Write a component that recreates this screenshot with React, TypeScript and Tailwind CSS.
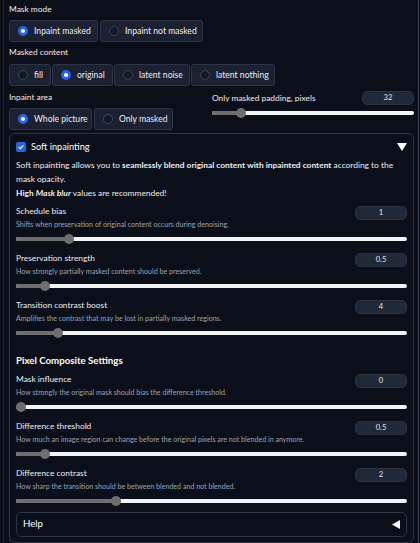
import React from "react";

function Radio({ label, checked, w }: { label: string; checked?: boolean; w: string }) {
  return (
    <div
      className={`flex h-[22px] shrink-0 items-center gap-[6px] whitespace-nowrap rounded-[3px] border border-[#2e3645] bg-[#1b2130] pl-[8px] text-[8.6px] text-[#eceef2] ${w}`}
    >
      {checked ? (
        <span className="flex h-[10px] w-[10px] items-center justify-center rounded-full bg-[#2563eb]">
          <span className="h-[4px] w-[4px] rounded-full bg-white" />
        </span>
      ) : (
        <span className="h-[10px] w-[10px] rounded-full border border-[#3f4856] bg-[#111827]" />
      )}
      <span>{label}</span>
    </div>
  );
}

// pct = where the thumb centre sits along the track
function Slider({ pct }: { pct: number }) {
  return (
    <div className="relative h-[10px]">
      <div className="absolute left-0 right-0 top-[3px] h-[4px] rounded-full bg-[#f3f4f6]" />
      <div
        className="absolute left-0 top-[3px] h-[4px] rounded-full bg-[#6e6e6e]"
        style={{ width: `${pct}%` }}
      />
      <div
        className="absolute top-0 h-[10px] w-[10px] rounded-full bg-[#6e6e6e]"
        style={{ left: `calc(${pct}% - 5px)` }}
      />
    </div>
  );
}

function NumBox({ value }: { value: string }) {
  return (
    <div className="flex h-[14px] w-[52px] items-center justify-center rounded-[5px] border border-[#2a3240] bg-[#1f2937] text-[7.6px] text-[#e5e7eb]">
      {value}
    </div>
  );
}

function Setting({
  title,
  info,
  value,
  pct,
}: {
  title: string;
  info: string;
  value: string;
  pct: number;
}) {
  return (
    <div className="flex h-[40px] flex-col">
      <div className="flex items-start justify-between">
        <div className="flex flex-col">
          <span className="h-[14px] text-[8.4px] leading-[14px] text-[#eceef2]">{title}</span>
          <span className="h-[13px] whitespace-nowrap text-[7.1px] leading-[13px] text-[#9ca3af]">{info}</span>
        </div>
        <div className="pt-[2px]">
          <NumBox value={value} />
        </div>
      </div>
      <div className="mt-[3px]">
        <Slider pct={pct} />
      </div>
    </div>
  );
}

export default function App() {
  return (
    <div className="min-h-screen w-[420px] overflow-hidden bg-[#0b0f19] font-['Lato','Noto_Sans',sans-serif] text-[#eceef2]">
      <div className="ml-[3px] w-[416px] border-l border-r border-l-[#1a202c] border-r-[#3a4150] border-r-dashed pb-[40px] pl-[5px] pr-[4px]">
        <div className="pt-[2px] text-[8.4px] leading-[14px]">Mask mode</div>
        <div className="mt-[4px] flex gap-[2px]">
          <Radio label="Inpaint masked" checked w="w-[89px]" />
          <Radio label="Inpaint not masked" w="w-[103px]" />
        </div>

        <div className="mt-[3px] text-[8.4px] leading-[14px]">Masked content</div>
        <div className="mt-[5px] flex gap-[1px]">
          <Radio label="fill" w="w-[42px]" />
          <Radio label="original" checked w="w-[61px]" />
          <Radio label="latent noise" w="w-[76px]" />
          <Radio label="latent nothing" w="w-[84px]" />
        </div>

        <div className="mt-[4px] flex">
          <div className="w-[203px]">
            <div className="text-[8.4px] leading-[14px]">Inpaint area</div>
            <div className="mt-[4px] flex gap-[2px]">
              <Radio label="Whole picture" checked w="w-[83px]" />
              <Radio label="Only masked" w="w-[79px]" />
            </div>
          </div>
          <div className="flex flex-1 flex-col pt-[1px]">
            <div className="flex items-center justify-between">
              <span className="text-[8.4px] leading-[14px]">Only masked padding, pixels</span>
              <NumBox value="32" />
            </div>
            <div className="mt-[3px]">
              <Slider pct={14.4} />
            </div>
          </div>
        </div>

        <div className="mt-[3px] rounded-[6px] border border-[#2e3645] px-[6px] pb-[5px] pt-[5px]">
          <div className="flex h-[16px] items-center justify-between">
            <div className="flex items-center gap-[5px]">
              <span className="flex h-[10px] w-[10px] items-center justify-center rounded-[2px] bg-[#2563eb]">
                <svg viewBox="0 0 12 12" className="h-[8px] w-[8px]">
                  <path d="M2.5 6.2l2.3 2.3 4.7-5" fill="none" stroke="white" strokeWidth="1.8" />
                </svg>
              </span>
              <span className="text-[9.2px] leading-[16px] text-white">Soft inpainting</span>
            </div>
            <svg viewBox="0 0 10 8" className="h-[8px] w-[10px]">
              <path d="M0 0h10L5 8z" fill="white" />
            </svg>
          </div>

          <p className="mt-[3px] whitespace-nowrap text-[8.4px] leading-[14px]">
            Soft inpainting allows you to{" "}
            <b>seamlessly blend original content with inpainted content</b> according to the
            <br />
            mask opacity.
          </p>
          <p className="text-[8.4px] leading-[14px]">
            <b>High</b>{" "}
            <b>
              <i>Mask blur</i>
            </b>{" "}
            values are recommended!
          </p>

          <div className="mt-[4px] flex flex-col gap-[7px]">
            <Setting
              title="Schedule bias"
              info="Shifts when preservation of original content occurs during denoising."
              value="1"
              pct={13.5}
            />
            <Setting
              title="Preservation strength"
              info="How strongly partially masked content should be preserved."
              value="0.5"
              pct={7.4}
            />
            <Setting
              title="Transition contrast boost"
              info="Amplifies the contrast that may be lost in partially masked regions."
              value="4"
              pct={10.7}
            />
          </div>

          <div className="mt-[14px] h-[16px] text-[9.7px] font-bold leading-[16px] text-white">
            Pixel Composite Settings
          </div>

          <div className="mt-[4px] flex flex-col gap-[7px]">
            <Setting
              title="Mask influence"
              info="How strongly the original mask should bias the difference threshold."
              value="0"
              pct={1.3}
            />
            <Setting
              title="Difference threshold"
              info="How much an image region can change before the original pixels are not blended in anymore."
              value="0.5"
              pct={7.4}
            />
            <Setting
              title="Difference contrast"
              info="How sharp the transition should be between blended and not blended."
              value="2"
              pct={25.7}
            />
          </div>

          <div className="mt-[6px] flex h-[25px] items-center justify-between rounded-[5px] border border-[#2e3645] pl-[6px] pr-[6px]">
            <span className="text-[9.6px] text-white">Help</span>
            <svg viewBox="0 0 8 9" className="h-[9px] w-[8px]">
              <path d="M8 0v9L0 4.5z" fill="white" />
            </svg>
          </div>
        </div>
      </div>
    </div>
  );
}
